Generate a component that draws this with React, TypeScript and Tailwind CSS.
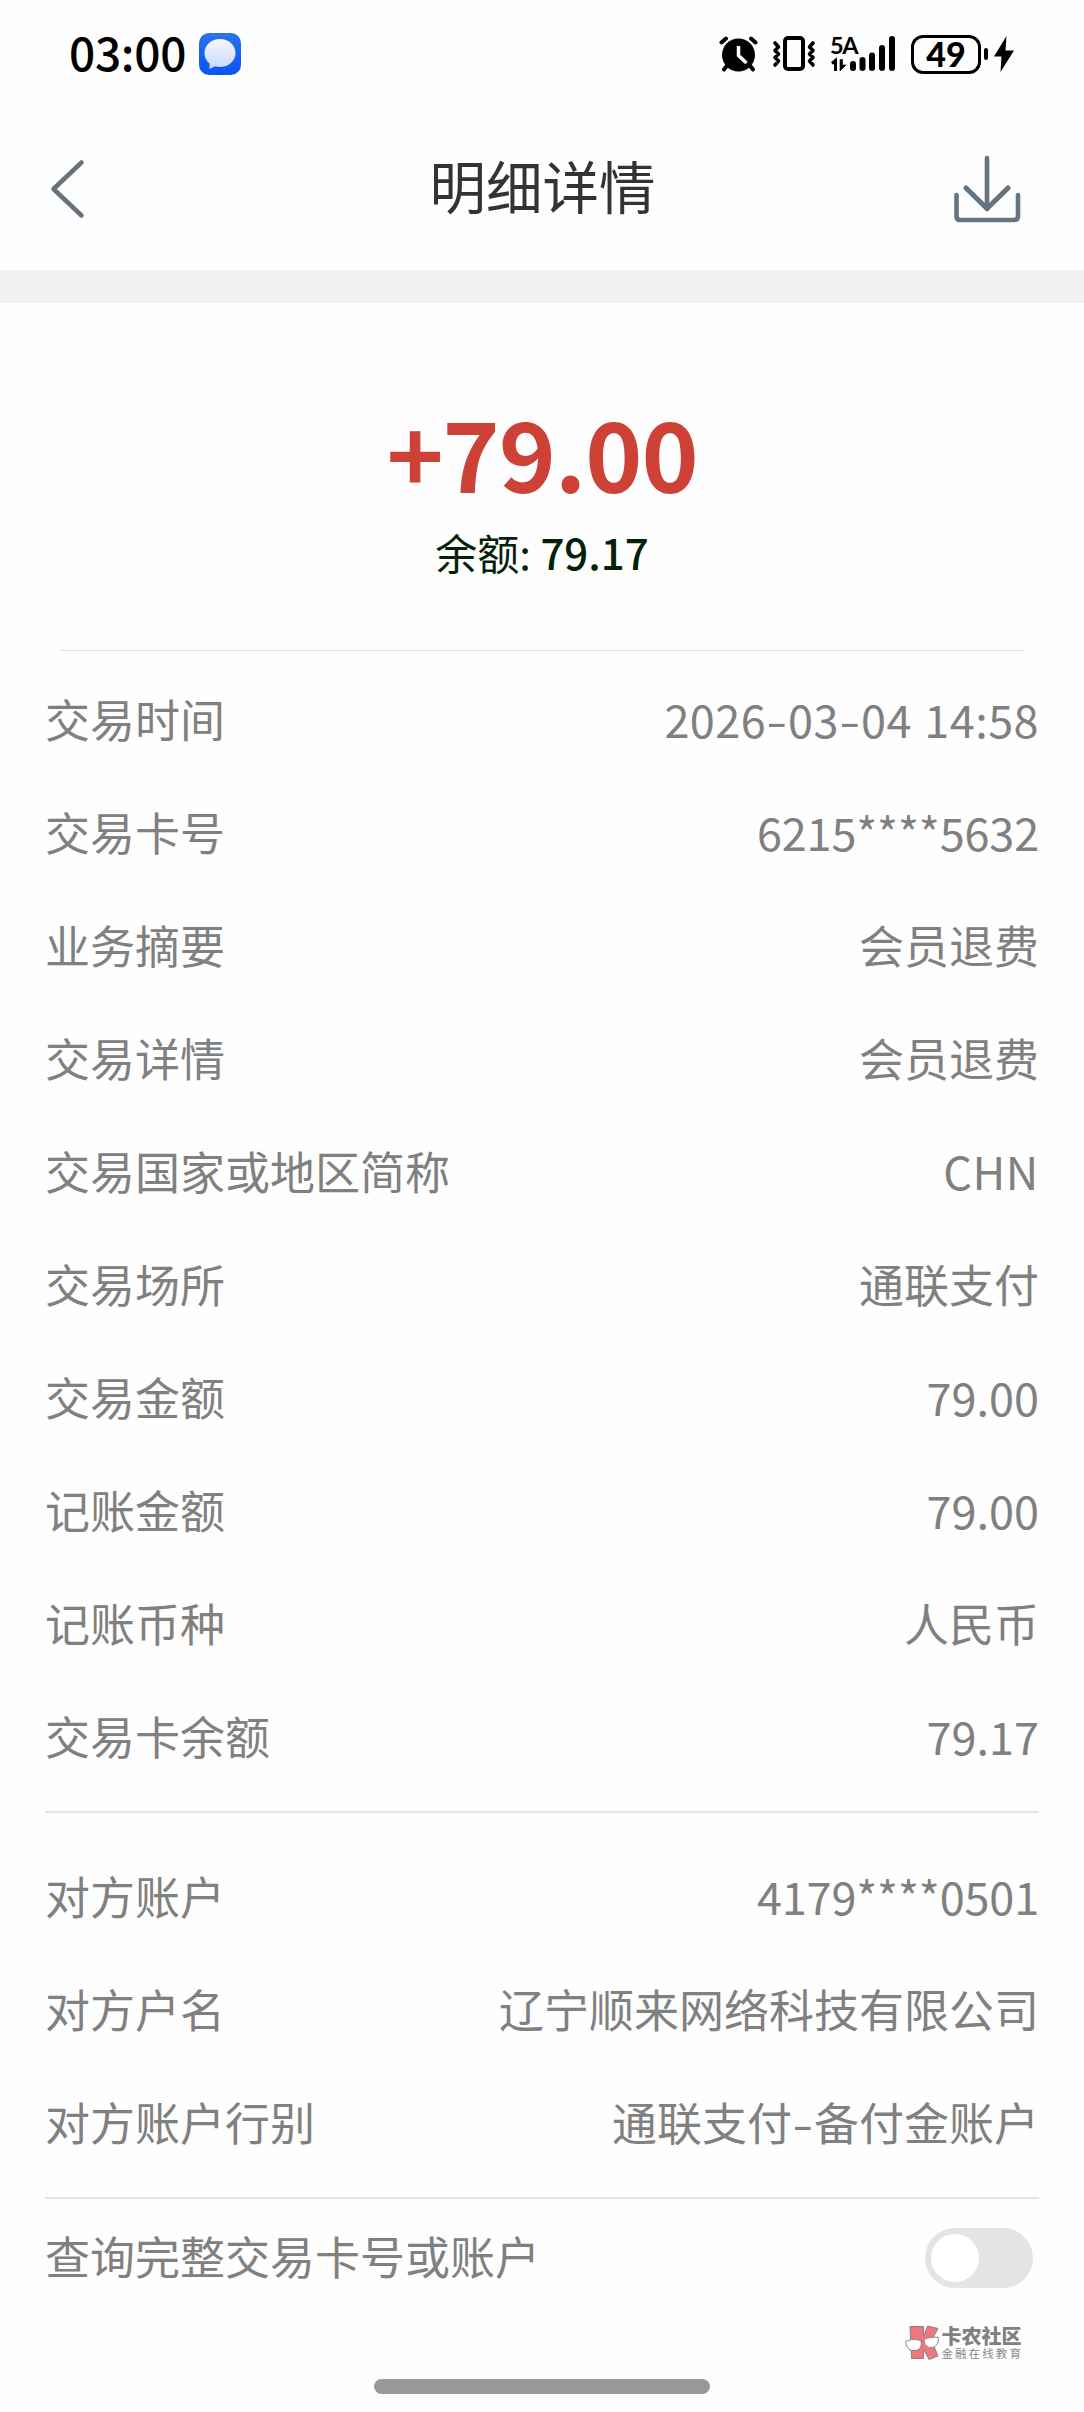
import type { ReactNode } from 'react';

type Item = { label: string; value: ReactNode; tracking?: string };

function Dash() {
  return (
    <span className="inline-block w-[22px] text-center">
      <span className="inline-block scale-x-[1.35]">-</span>
    </span>
  );
}

const details: Item[] = [
  { label: '交易时间', value: <>2026<Dash />03<Dash />04 14:58</>, tracking: 'tracking-[0.45px] [word-spacing:2px]' },
  { label: '交易卡号', value: '6215****5632', tracking: 'tracking-[-0.15px]' },
  { label: '业务摘要', value: '会员退费' },
  { label: '交易详情', value: '会员退费' },
  { label: '交易国家或地区简称', value: 'CHN', tracking: 'tracking-[0.6px]' },
  { label: '交易场所', value: '通联支付' },
  { label: '交易金额', value: '79.00' },
  { label: '记账金额', value: '79.00' },
  { label: '记账币种', value: '人民币' },
  { label: '交易卡余额', value: '79.17' },
];

const counterparty: Item[] = [
  { label: '对方账户', value: '4179****0501', tracking: 'tracking-[-0.15px]' },
  { label: '对方户名', value: '辽宁顺来网络科技有限公司' },
  { label: '对方账户行别', value: <>通联支付<Dash />备付金账户</> },
];

function Row({ label, children, tracking = '' }: { label: string; children: ReactNode; tracking?: string }) {
  return (
    <div className="flex h-[113px] items-center justify-between">
      <span>{label}</span>
      <span className={tracking}>{children}</span>
    </div>
  );
}

function MessageIcon() {
  return (
    <svg className="ml-[13px] h-[42px] w-[42px]" viewBox="0 0 42 42">
      <defs>
        <linearGradient id="tile" x1="0" y1="0" x2="0" y2="1">
          <stop offset="0" stopColor="#2c72ec" />
          <stop offset="1" stopColor="#0a54f4" />
        </linearGradient>
        <linearGradient id="bubble" x1="0" y1="0" x2="0" y2="1">
          <stop offset="0" stopColor="#f5f8ff" />
          <stop offset="1" stopColor="#c9d9fb" />
        </linearGradient>
      </defs>
      <rect width="42" height="42" rx="10" fill="url(#tile)" />
      <path d="M21 6C12.500 6 5.500 12 5.500 20C5.500 24.500 7.500 28 10.500 30.500C11 32.500 10.500 34 9.800 35.700C12.500 35.500 14.500 34.500 16 33.300C17.600 33.800 19.300 34 21 34C29.500 34 36.500 28 36.500 20S29.500 6 21 6Z" fill="url(#bubble)" />
    </svg>
  );
}

function AlarmIcon() {
  return (
    <svg className="h-[38px] w-[40px]" viewBox="0 0 40 38">
      <circle cx="19.500" cy="20" r="16.500" />
      <path d="M2.500 7.500L7 3.500M36.500 7.500L32 3.500M8.500 30L5 34.500M30.500 30L34 34.500" stroke="#000" strokeWidth="4" strokeLinecap="round" />
      <path d="M19.500 11V20.500L27.500 28" fill="none" stroke="#fff" strokeWidth="3.500" />
    </svg>
  );
}

function VibrateIcon() {
  return (
    <svg className="ml-[13px] h-[38px] w-[44px]" viewBox="0 0 44 38" fill="none" stroke="#000">
      <rect x="13" y="3" width="18" height="31" rx="3" strokeWidth="4" />
      <path d="M3 8L6.500 12L3 15.500L6.500 19L3 22.500L6.500 26L3 30M41 8L37.500 12L41 15.500L37.500 19L41 22.500L37.500 26L41 30" strokeWidth="3.600" strokeLinecap="round" strokeLinejoin="round" />
    </svg>
  );
}

function SignalIcon() {
  return (
    <div className="ml-[14px] flex h-[38px] w-[66px]">
      <div className="flex w-0 flex-col">
        <span className="mt-[-3px] w-[26px] whitespace-nowrap font-[Lato,sans-serif] text-[23.500px] font-bold leading-[26px] tracking-[-1.300px]">5A</span>
      </div>
      <svg className="h-[38px] w-[66px] shrink-0" viewBox="0 0 66 38">
        <path d="M2 28.500L5.500 25.500V36" fill="none" stroke="#000" strokeWidth="3" />
        <path d="M10 24.500V36L16 30H12.500V24.500Z" stroke="#000" strokeWidth=".6" />
        <path d="M23 29V33M32.500 25V33M42 20.500V33M52 13V33M62 4V33" stroke="#000" strokeWidth="6" strokeLinecap="round" />
      </svg>
    </div>
  );
}

function CommunityMark() {
  return (
    <svg className="h-[36px] w-[34px]" viewBox="0 0 34 36" stroke="#858585" strokeWidth="1">
      <path d="M5 1.500H18.500V12L22.500 1L33 3.500L26.500 15.500L33 31L24 34.500L18.500 24V33.500H6.500Z" fill="#f07580" />
      <path d="M.8 16.500C5 14 12 14 16 16C17 22 15 25.500 9 25.500C3 25.500 1 22 .8 16.500ZM19 14.500C23 12.500 29 11.500 33.300 12.500C34 18.500 31 22.500 26 22.500C21.500 22.500 19.500 20 19 14.500Z" fill="#fff" />
    </svg>
  );
}

export default function App() {
  return (
    <div className="flex h-[2412px] w-[1084px] flex-col overflow-hidden bg-[#fefefe] font-['Noto_Sans_CJK_SC',sans-serif] text-[#808080]">
      <div className="flex h-[108px] items-center pl-[69px] pr-[70px] text-black">
        <span className="pb-[6px] text-[46px] font-medium leading-none tracking-[-0.3px]">03:00</span>
        <MessageIcon />
        <div className="ml-auto flex items-center">
          <AlarmIcon />
          <VibrateIcon />
          <SignalIcon />
          <div className="ml-[15px] flex h-[39px] w-[70px] items-center justify-center rounded-[12px] border-[3px] border-black font-[Lato,sans-serif] text-[34px] font-black leading-none">49</div>
          <div className="ml-[3px] h-[12px] w-[4px] rounded-full bg-black" />
          <svg className="ml-[6px] h-[38px] w-[20px]" viewBox="0 0 20 38">
            <path d="M12.500 1L0 21.500H7.500L6.500 37L20 15.500H11.500Z" />
          </svg>
        </div>
      </div>

      <header className="flex h-[162px] items-center justify-between pl-[50px] pr-[63px]">
        <svg className="h-[60px] w-[36px]" viewBox="0 0 36 60" fill="none" stroke="#65737e" strokeWidth="4.500" strokeLinecap="round" strokeLinejoin="round">
          <path d="M31.500 3.500L3.500 30L31.500 56.500" />
        </svg>
        <h1 className="ml-[46px] pb-[9px] text-[56.500px] leading-none text-[#333]">明细详情</h1>
        <svg className="h-[68px] w-[68px]" viewBox="0 0 68 68" fill="none" stroke="#657481" strokeWidth="4.600" strokeLinecap="round" strokeLinejoin="round">
          <path d="M34 3V54M3.500 40V61Q3.500 65 7 65H61Q65 65 65 61V40" />
          <path d="M13 33L34 53.500L55 33" strokeWidth="5.200" />
        </svg>
      </header>

      <div className="h-[33px] bg-[#f1f1f3]" />

      <section className="mx-[60px] flex h-[348px] flex-col items-center border-b border-[#dcdfdf] pt-[98px]">
        <div className="text-[97px] font-bold leading-[100px] tracking-[-1.100px] text-[#cd4137]">+79.00</div>
        <div className="mt-[23px] text-[42px] leading-[56px] text-[#042208]">
          余额: <span className="font-medium">79.17</span>
        </div>
      </section>

      <section className="mx-[45px] h-[1162px] border-b-2 border-[#e3e3e3] pt-[11px] text-[45px] leading-[60px]">
        {details.map((d) => (
          <Row key={d.label} label={d.label} tracking={d.tracking}>{d.value}</Row>
        ))}
      </section>

      <section className="mx-[45px] h-[386px] border-b-2 border-[#e3e3e3] pt-[26px] text-[45px] leading-[60px]">
        {counterparty.map((d) => (
          <Row key={d.label} label={d.label} tracking={d.tracking}>{d.value}</Row>
        ))}
      </section>

      <section className="flex h-[118px] items-center justify-between pl-[45px] pr-[51px] text-[45px] leading-[60px]">
        <span className="pb-[5px]">查询完整交易卡号或账户</span>
        <button className="flex h-[60px] w-[108px] items-center rounded-full bg-[#e4e4e4] pl-[6px]" aria-label="查询完整交易卡号或账户">
          <span className="h-[48px] w-[48px] rounded-full bg-white" />
        </button>
      </section>

      <div className="ml-auto mr-[61px] mt-[5px] flex h-[42px] items-center">
        <CommunityMark />
        <div className="ml-[2px] flex flex-col pb-[2px]">
          <span className="text-[20px] font-black leading-[21px] text-[#808080]">卡农社区</span>
          <span className="text-[11.500px] leading-[14px] tracking-[2.100px] text-[#888]">金融在线教育</span>
        </div>
      </div>

      <div className="mx-auto mb-[18px] mt-auto h-[15px] w-[336px] rounded-full bg-[#999]" />
    </div>
  );
}
